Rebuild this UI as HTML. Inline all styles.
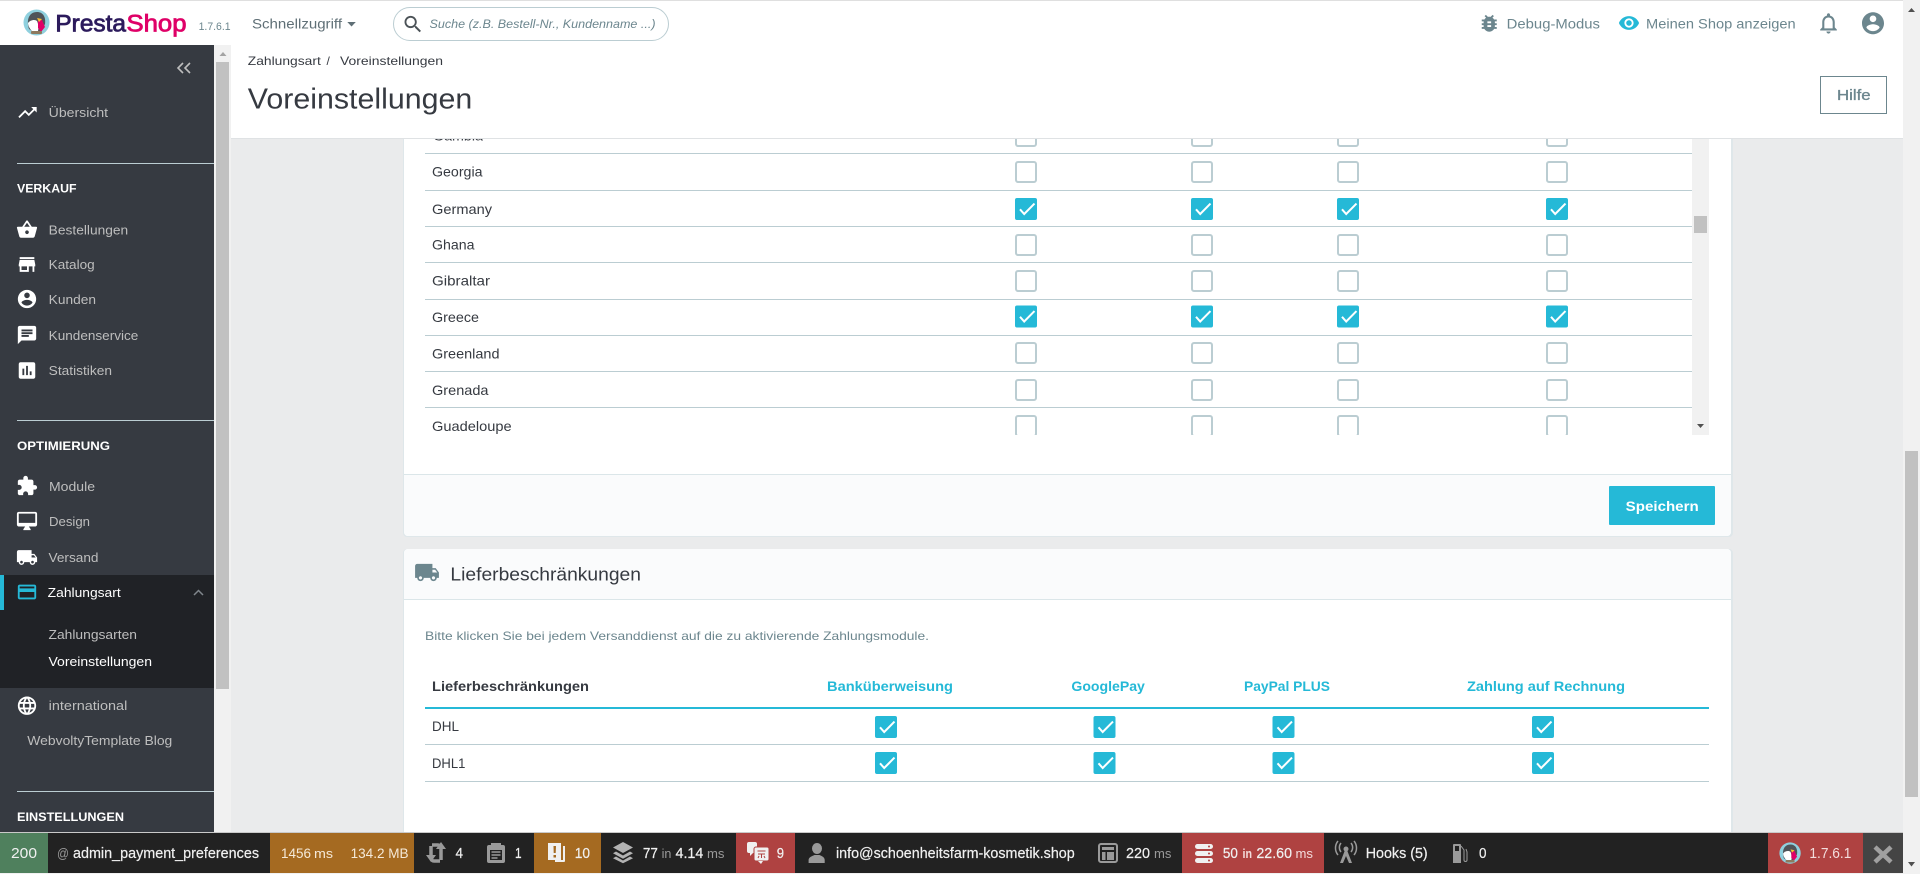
<!DOCTYPE html>
<html lang="de">
<head>
<meta charset="utf-8">
<title>Voreinstellungen - PrestaShop</title>
<style>
html,body{margin:0;padding:0;width:1920px;height:874px;overflow:hidden;background:#eaebec}
svg{display:block;font-family:"Liberation Sans",Arial,sans-serif}
.side{font-size:13px;fill:#bebebe}
.head{font-size:12px;font-weight:700;fill:#fff}
.row{font-size:14px;fill:#363a41}
.gr{font-size:14px;fill:#6c868e}
.th{font-size:14px;font-weight:700;fill:#25b9d7}
.bar{font-size:14.5px;fill:#f0f0f0;stroke:#f0f0f0;stroke-width:.2px}
.b2{font-size:12.5px;fill:#9a9a9a}
.o2{font-size:12.5px;fill:#f5e9d8}
</style>
</head>
<body>
<svg width="1920" height="874" viewBox="0 0 1920 874" xmlns="http://www.w3.org/2000/svg">
<defs>
<g id="u"><rect x="1" y="1" width="20" height="20" rx="2" fill="#fff" stroke="#bbcdd2" stroke-width="2"/></g>
<g id="k"><rect width="22" height="22" rx="2" fill="#25b9d7"/><path d="M5 11.3L9.2 16 19.5 5.6" fill="none" stroke="#fff" stroke-width="2"/></g>
<path id="i-up" d="M16 6l2.29 2.29-4.88 4.88-4-4L2 16.59 3.41 18l6-6 4 4 6.3-6.29L22 12V6z"/>
<path id="i-bask" d="M17.21 9l-4.38-6.56c-.19-.28-.51-.42-.83-.42-.32 0-.64.14-.83.43L6.79 9H2c-.55 0-1 .45-1 1 0 .09.01.18.04.27l2.54 9.27c.23.84 1 1.46 1.92 1.46h13c.92 0 1.69-.62 1.93-1.46l2.54-9.27L23 10c0-.55-.45-1-1-1h-4.79zM9 9l3-4.4L15 9H9zm3 8c-1.1 0-2-.9-2-2s.9-2 2-2 2 .9 2 2-.9 2-2 2z"/>
<path id="i-store" d="M20 4H4v2h16V4zm1 10v-2l-1-5H4l-1 5v2h1v6h10v-6h4v6h2v-6h1zm-9 4H6v-4h6v4z"/>
<path id="i-acc" d="M12 2C6.48 2 2 6.48 2 12s4.48 10 10 10 10-4.48 10-10S17.52 2 12 2zm0 3c1.66 0 3 1.34 3 3s-1.34 3-3 3-3-1.34-3-3 1.34-3 3-3zm0 14.2c-2.5 0-4.71-1.28-6-3.22.03-1.99 4-3.08 6-3.08 1.99 0 5.97 1.09 6 3.08-1.29 1.94-3.5 3.22-6 3.22z"/>
<path id="i-chat" d="M20 2H4c-1.1 0-1.99.9-1.99 2L2 22l4-4h14c1.1 0 2-.9 2-2V4c0-1.1-.9-2-2-2zM6 9h12v2H6V9zm8 5H6v-2h8v2zm4-6H6V6h12v2z"/>
<path id="i-stat" d="M19 3H5c-1.1 0-2 .9-2 2v14c0 1.1.9 2 2 2h14c1.1 0 2-.9 2-2V5c0-1.1-.9-2-2-2zM9 17H7v-7h2v7zm4 0h-2V7h2v10zm4 0h-2v-4h2v4z"/>
<path id="i-ext" d="M20.5 11H19V7c0-1.1-.9-2-2-2h-4V3.5C13 2.12 11.88 1 10.5 1S8 2.12 8 3.5V5H4c-1.1 0-1.99.9-1.99 2v3.8H3.5c1.49 0 2.7 1.21 2.7 2.7s-1.21 2.7-2.7 2.7H2V20c0 1.1.9 2 2 2h3.8v-1.5c0-1.49 1.21-2.7 2.7-2.7 1.49 0 2.7 1.21 2.7 2.7V22H17c1.1 0 2-.9 2-2v-4h1.5c1.38 0 2.5-1.12 2.5-2.5S21.88 11 20.5 11z"/>
<path id="i-desk" d="M21 2H3c-1.1 0-2 .9-2 2v12c0 1.1.9 2 2 2h7l-2 3v1h8v-1l-2-3h7c1.1 0 2-.9 2-2V4c0-1.1-.9-2-2-2zm0 12H3V4h18v10z"/>
<path id="i-truck" d="M20 8h-3V4H3c-1.1 0-2 .9-2 2v11h2c0 1.66 1.34 3 3 3s3-1.34 3-3h6c0 1.66 1.34 3 3 3s3-1.34 3-3h2v-5l-3-4zM6 18.5c-.83 0-1.5-.67-1.5-1.5s.67-1.5 1.5-1.5 1.5.67 1.5 1.5-.67 1.5-1.5 1.5zm13.5-9l1.96 2.5H17V9.5h2.5zm-1.5 9c-.83 0-1.5-.67-1.5-1.5s.67-1.5 1.5-1.5 1.5.67 1.5 1.5-.67 1.5-1.5 1.5z"/>
<path id="i-card" d="M20 4H4c-1.11 0-1.99.89-1.99 2L2 18c0 1.11.89 2 2 2h16c1.11 0 2-.89 2-2V6c0-1.11-.89-2-2-2zm0 14H4v-6h16v6zm0-10H4V6h16v2z"/>
<path id="i-lang" d="M11.99 2C6.47 2 2 6.48 2 12s4.47 10 9.99 10C17.52 22 22 17.52 22 12S17.52 2 11.99 2zm6.93 6h-2.95c-.32-1.25-.78-2.45-1.38-3.56 1.84.63 3.37 1.91 4.33 3.56zM12 4.04c.83 1.2 1.48 2.53 1.91 3.96h-3.82c.43-1.43 1.08-2.76 1.91-3.96zM4.26 14C4.1 13.36 4 12.69 4 12s.1-1.36.26-2h3.38c-.08.66-.14 1.32-.14 2 0 .68.06 1.34.14 2H4.26zm.82 2h2.95c.32 1.25.78 2.45 1.38 3.56-1.84-.63-3.37-1.9-4.33-3.56zm2.95-8H5.08c.96-1.66 2.49-2.93 4.33-3.56C8.81 5.55 8.35 6.75 8.03 8zM12 19.96c-.83-1.2-1.48-2.53-1.91-3.96h3.82c-.43 1.43-1.08 2.76-1.91 3.96zM14.34 14H9.66c-.09-.66-.16-1.32-.16-2 0-.68.07-1.35.16-2h4.68c.09.65.16 1.32.16 2 0 .68-.07 1.34-.16 2zm.25 5.56c.6-1.11 1.06-2.31 1.38-3.56h2.95c-.96 1.65-2.49 2.93-4.33 3.56zM16.36 14c.08-.66.14-1.32.14-2 0-.68-.06-1.34-.14-2h3.38c.16.64.26 1.31.26 2s-.1 1.36-.26 2h-3.38z"/>
<path id="i-bug" d="M20 8h-2.81c-.45-.78-1.07-1.45-1.82-1.96L17 4.41 15.59 3l-2.17 2.17C12.96 5.06 12.49 5 12 5c-.49 0-.96.06-1.41.17L8.41 3 7 4.41l1.62 1.63C7.88 6.55 7.26 7.22 6.81 8H4v2h2.09c-.05.33-.09.66-.09 1v1H4v2h2v1c0 .34.04.67.09 1H4v2h2.81c1.04 1.79 2.97 3 5.19 3s4.15-1.21 5.19-3H20v-2h-2.09c.05-.33.09-.66.09-1v-1h2v-2h-2v-1c0-.34-.04-.67-.09-1H20V8zm-6 8h-4v-2h4v2zm0-4h-4v-2h4v2z"/>
<path id="i-eye" d="M12 4.5C7 4.5 2.73 7.61 1 12c1.73 4.39 6 7.5 11 7.5s9.27-3.11 11-7.5c-1.73-4.39-6-7.5-11-7.5zM12 17c-2.76 0-5-2.24-5-5s2.24-5 5-5 5 2.24 5 5-2.24 5-5 5zm0-8c-1.66 0-3 1.34-3 3s1.34 3 3 3 3-1.34 3-3-1.34-3-3-3z"/>
<path id="i-bell" d="M12 22c1.1 0 2-.9 2-2h-4c0 1.1.9 2 2 2zm6-6v-5c0-3.07-1.63-5.64-4.5-6.32V4c0-.83-.67-1.5-1.5-1.5s-1.5.67-1.5 1.5v.68C7.64 5.36 6 7.92 6 11v5l-2 2v1h16v-1l-2-2zm-2 1H8v-6c0-2.48 1.51-4.5 4-4.5s4 2.02 4 4.5v6z"/>
<path id="i-search" d="M15.5 14h-.79l-.28-.27C15.41 12.59 16 11.11 16 9.5 16 5.91 13.09 3 9.5 3S3 5.91 3 9.5 5.91 16 9.5 16c1.61 0 3.09-.59 4.23-1.57l.27.28v.79l5 4.99L20.49 19l-4.99-5zm-6 0C7.01 14 5 11.99 5 9.5S7.01 5 9.5 5 14 7.01 14 9.5 11.99 14 9.5 14z"/>
<g id="puffin">
<circle cx="13.5" cy="13.5" r="13" fill="#8fd0de"/>
<path d="M6 20C3 11 6 3 14 3c6 0 9 5 8 12l-4 7H9z" fill="#4f5459"/>
<path d="M5 14c2-3 7-4 9-2 1 2 2 6 1 10H9c-2-2-4-5-4-8z" fill="#fff"/>
<path d="M15 9l4 2 3 7-4 5-3-4z" fill="#df0067"/>
<path d="M14 9l5 1-3 3z" fill="#f4c233"/>
<rect x="8" y="22" width="11" height="3" rx="1" fill="#8d7a5f"/>
</g>
</defs>

<!-- page background -->
<rect width="1920" height="874" fill="#eaebec"/>

<!-- Card 1: country restrictions -->
<rect x="403" y="130" width="1330" height="407" rx="4" fill="#dfe7ea"/>
<rect x="404" y="130" width="1327" height="406" rx="4" fill="#fff"/>

<g class="row">
<text class="row" x="433" y="140.5" textLength="50" lengthAdjust="spacingAndGlyphs">Gambia</text>
<text class="row" x="432" y="176.5" textLength="50.5" lengthAdjust="spacingAndGlyphs">Georgia</text>
<text class="row" x="432" y="214" textLength="60" lengthAdjust="spacingAndGlyphs">Germany</text>
<text class="row" x="432" y="249.5" textLength="42.5" lengthAdjust="spacingAndGlyphs">Ghana</text>
<text class="row" x="432" y="285.5" textLength="58" lengthAdjust="spacingAndGlyphs">Gibraltar</text>
<text class="row" x="432" y="322" textLength="47" lengthAdjust="spacingAndGlyphs">Greece</text>
<text class="row" x="432" y="358.5" textLength="67.5" lengthAdjust="spacingAndGlyphs">Greenland</text>
<text class="row" x="432" y="395" textLength="56.5" lengthAdjust="spacingAndGlyphs">Grenada</text>
<text class="row" x="432" y="431" textLength="79.6" lengthAdjust="spacingAndGlyphs">Guadeloupe</text>
</g>
<g fill="#bbcdd2">
<rect x="425" y="153" width="1267" height="1"/>
<rect x="425" y="190" width="1267" height="1"/>
<rect x="425" y="226" width="1267" height="1"/>
<rect x="425" y="262" width="1267" height="1"/>
<rect x="425" y="299" width="1267" height="1"/>
<rect x="425" y="335" width="1267" height="1"/>
<rect x="425" y="371" width="1267" height="1"/>
<rect x="425" y="407" width="1267" height="1"/>
</g>
<!-- checkbox columns -->
<use href="#u" x="1015" y="125"/><use href="#u" x="1191" y="125"/><use href="#u" x="1337" y="125"/><use href="#u" x="1546" y="125"/>
<use href="#u" x="1015" y="161"/><use href="#u" x="1191" y="161"/><use href="#u" x="1337" y="161"/><use href="#u" x="1546" y="161"/>
<use href="#k" x="1015" y="198"/><use href="#k" x="1191" y="198"/><use href="#k" x="1337" y="198"/><use href="#k" x="1546" y="198"/>
<use href="#u" x="1015" y="234"/><use href="#u" x="1191" y="234"/><use href="#u" x="1337" y="234"/><use href="#u" x="1546" y="234"/>
<use href="#u" x="1015" y="270"/><use href="#u" x="1191" y="270"/><use href="#u" x="1337" y="270"/><use href="#u" x="1546" y="270"/>
<use href="#k" x="1015" y="305.500"/><use href="#k" x="1191" y="305.500"/><use href="#k" x="1337" y="305.500"/><use href="#k" x="1546" y="305.500"/>
<use href="#u" x="1015" y="342"/><use href="#u" x="1191" y="342"/><use href="#u" x="1337" y="342"/><use href="#u" x="1546" y="342"/>
<use href="#u" x="1015" y="379"/><use href="#u" x="1191" y="379"/><use href="#u" x="1337" y="379"/><use href="#u" x="1546" y="379"/>
<use href="#u" x="1015" y="415"/><use href="#u" x="1191" y="415"/><use href="#u" x="1337" y="415"/><use href="#u" x="1546" y="415"/>
<!-- clip below list -->
<rect x="425" y="435" width="1306" height="39" fill="#fff"/>
<!-- inner scrollbar -->
<rect x="1692" y="130" width="17" height="305" fill="#f1f1f1"/>
<rect x="1694" y="216" width="13" height="17" fill="#c1c1c1"/>
<path d="M1697 424h7l-3.5 4z" fill="#505050"/>
<!-- card footer -->
<path d="M404 474H1731V532a4 4 0 0 1-4 4H408a4 4 0 0 1-4-4z" fill="#fafbfc"/>
<rect x="404" y="474" width="1327" height="1" fill="#dbe6e9"/>
<rect x="1609" y="486" width="106" height="39" rx="1" fill="#25b9d7"/>
<text x="1625.7" y="511" font-size="14" font-weight="700" fill="#fff" textLength="73" lengthAdjust="spacingAndGlyphs">Speichern</text>

<!-- Card 2: carrier restrictions -->
<path d="M403 553a4 4 0 0 1 4-4H1729a4 4 0 0 1 4 4V840H403z" fill="#dfe7ea"/>
<path d="M404 553a4 4 0 0 1 4-4H1727a4 4 0 0 1 4 4V840H404z" fill="#fff"/>
<path d="M404 553a4 4 0 0 1 4-4H1727a4 4 0 0 1 4 4V599H404z" fill="#fafbfc"/>
<rect x="404" y="599" width="1327" height="1" fill="#dbe6e9"/>
<svg x="414" y="559.5" width="26" height="26" viewBox="0 0 24 24" fill="#6c868e"><use href="#i-truck"/></svg>
<text x="450.4" y="580.3" font-size="18" fill="#363a41" textLength="190.6" lengthAdjust="spacingAndGlyphs">Lieferbeschränkungen</text>
<text x="425" y="640" font-size="12" fill="#6c868e" textLength="504" lengthAdjust="spacingAndGlyphs">Bitte klicken Sie bei jedem Versanddienst auf die zu aktivierende Zahlungsmodule.</text>
<text x="432" y="691" font-size="14" font-weight="700" fill="#363a41" textLength="157" lengthAdjust="spacingAndGlyphs">Lieferbeschränkungen</text>
<text class="th" x="827" y="691" textLength="126" lengthAdjust="spacingAndGlyphs">Banküberweisung</text>
<text class="th" x="1071.4" y="691" textLength="73.5" lengthAdjust="spacingAndGlyphs">GooglePay</text>
<text class="th" x="1244" y="691" textLength="86" lengthAdjust="spacingAndGlyphs">PayPal PLUS</text>
<text class="th" x="1467" y="691" textLength="158" lengthAdjust="spacingAndGlyphs">Zahlung auf Rechnung</text>
<rect x="425" y="707" width="1284" height="2" fill="#25b9d7"/>
<text class="row" x="432" y="731" textLength="27" lengthAdjust="spacingAndGlyphs">DHL</text>
<text class="row" x="432" y="768" textLength="33.4" lengthAdjust="spacingAndGlyphs">DHL1</text>
<rect x="425" y="744" width="1284" height="1" fill="#bbcdd2"/>
<rect x="425" y="781" width="1284" height="1" fill="#bbcdd2"/>
<use href="#k" x="875" y="716"/><use href="#k" x="1093.500" y="716"/><use href="#k" x="1272.500" y="716"/><use href="#k" x="1532" y="716"/>
<use href="#k" x="875" y="752"/><use href="#k" x="1093.500" y="752"/><use href="#k" x="1272.500" y="752"/><use href="#k" x="1532" y="752"/>

<!-- Header bar -->
<rect x="231" y="45" width="1672" height="93" fill="#fff"/>
<rect x="231" y="138" width="1672" height="1" fill="#dfe2e4"/>
<text x="247.8" y="65" font-size="12" fill="#363a41" textLength="73" lengthAdjust="spacingAndGlyphs">Zahlungsart</text>
<text x="326.5" y="65" font-size="12" fill="#363a41">/</text>
<text x="340" y="65" font-size="12" fill="#363a41" textLength="103" lengthAdjust="spacingAndGlyphs">Voreinstellungen</text>
<text x="247.8" y="108.7" font-size="29" fill="#363a41" textLength="224.5" lengthAdjust="spacingAndGlyphs">Voreinstellungen</text>
<rect x="1820.5" y="76.5" width="66" height="37" fill="#fff" stroke="#6c868e"/>
<text x="1837" y="100" font-size="15" fill="#6c868e" stroke="#6c868e" stroke-width=".35" textLength="33.6" lengthAdjust="spacingAndGlyphs">Hilfe</text>

<!-- Top bar -->
<rect width="1903" height="45" fill="#fff"/>
<rect width="1903" height="1" fill="#dfdfdf"/>
<use href="#puffin" x="23" y="9"/>
<text x="55.4" y="31.3" font-size="24" fill="#2c1b5c" stroke="#2c1b5c" stroke-width=".8" textLength="70.6" lengthAdjust="spacingAndGlyphs">Presta</text>
<text x="126.5" y="31.3" font-size="24" fill="#df0067" stroke="#df0067" stroke-width=".8" textLength="60" lengthAdjust="spacingAndGlyphs">Shop</text>
<text x="198.6" y="30" font-size="11" fill="#6c868e" textLength="32" lengthAdjust="spacingAndGlyphs">1.7.6.1</text>
<text x="252" y="28.3" font-size="14" fill="#5f6f76" textLength="90" lengthAdjust="spacingAndGlyphs">Schnellzugriff</text>
<path d="M347.3 22h8.5l-4.25 4.5z" fill="#5f6f76"/>
<rect x="393.5" y="7.5" width="275" height="33" rx="16.5" fill="#fff" stroke="#bbcdd2"/>
<svg x="401.7" y="13" width="22.6" height="22.6" viewBox="0 0 24 24" fill="#4b5257"><use href="#i-search"/></svg>
<text x="429.5" y="28" font-size="12" font-style="italic" fill="#6c868e" textLength="226" lengthAdjust="spacingAndGlyphs">Suche (z.B. Bestell-Nr., Kundenname ...)</text>
<svg x="1478" y="12" width="22.5" height="22.5" viewBox="0 0 24 24" fill="#6c868e"><use href="#i-bug"/></svg>
<text class="gr" x="1506.7" y="28.3" textLength="93.3" lengthAdjust="spacingAndGlyphs">Debug-Modus</text>
<svg x="1618" y="12" width="22" height="22" viewBox="0 0 24 24" fill="#25b9d7"><use href="#i-eye"/></svg>
<text class="gr" x="1646" y="28.3" textLength="149.7" lengthAdjust="spacingAndGlyphs">Meinen Shop anzeigen</text>
<svg x="1816" y="10.7" width="25" height="25" viewBox="0 0 24 24" fill="#6c868e"><use href="#i-bell"/></svg>
<svg x="1859.8" y="10" width="26.4" height="26.4" viewBox="0 0 24 24" fill="#6c868e"><use href="#i-acc"/></svg>

<!-- Sidebar -->
<rect x="0" y="45" width="214" height="788" fill="#363a41"/>
<rect x="214" y="45" width="17" height="788" fill="#f1f1f1"/>
<rect x="216" y="62" width="13" height="627" fill="#c1c1c1"/>
<path d="M219.5 56h7l-3.5-4z" fill="#a3a3a3"/>
<path d="M183 63l-5 5 5 5M190 63l-5 5 5 5" fill="none" stroke="#bebebe" stroke-width="1.6"/>

<svg x="16.5" y="101.5" width="22" height="22" viewBox="0 0 24 24" fill="#fff"><use href="#i-up"/></svg>
<text class="side" x="48.7" y="117" textLength="59.4" lengthAdjust="spacingAndGlyphs">Übersicht</text>
<rect x="17" y="163" width="197" height="1" fill="#bbcdd2"/>
<text class="head" x="17" y="192.500" textLength="59.5" lengthAdjust="spacingAndGlyphs">VERKAUF</text>

<svg x="16" y="218.5" width="22" height="22" viewBox="0 0 24 24" fill="#fff"><use href="#i-bask"/></svg>
<text class="side" x="48.7" y="234.3" textLength="79.5" lengthAdjust="spacingAndGlyphs">Bestellungen</text>
<svg x="16" y="253.5" width="22" height="22" viewBox="0 0 24 24" fill="#fff"><use href="#i-store"/></svg>
<text class="side" x="48.7" y="269" textLength="46" lengthAdjust="spacingAndGlyphs">Katalog</text>
<svg x="16" y="288" width="22" height="22" viewBox="0 0 24 24" fill="#fff"><use href="#i-acc"/></svg>
<text class="side" x="48.7" y="304" textLength="47.3" lengthAdjust="spacingAndGlyphs">Kunden</text>
<svg x="16" y="324" width="22" height="22" viewBox="0 0 24 24" fill="#fff"><use href="#i-chat"/></svg>
<text class="side" x="48.7" y="340" textLength="89.6" lengthAdjust="spacingAndGlyphs">Kundenservice</text>
<svg x="16" y="359.5" width="22" height="22" viewBox="0 0 24 24" fill="#fff"><use href="#i-stat"/></svg>
<text class="side" x="48.7" y="375" textLength="63.3" lengthAdjust="spacingAndGlyphs">Statistiken</text>

<rect x="17" y="420" width="197" height="1" fill="#bbcdd2"/>
<text class="head" x="17" y="450" textLength="93" lengthAdjust="spacingAndGlyphs">OPTIMIERUNG</text>

<svg x="16" y="475" width="22" height="22" viewBox="0 0 24 24" fill="#fff"><use href="#i-ext"/></svg>
<text class="side" x="49" y="491" textLength="46" lengthAdjust="spacingAndGlyphs">Module</text>
<svg x="16" y="510" width="22" height="22" viewBox="0 0 24 24" fill="#fff"><use href="#i-desk"/></svg>
<text class="side" x="49" y="526" textLength="41" lengthAdjust="spacingAndGlyphs">Design</text>
<svg x="16" y="546.5" width="22" height="22" viewBox="0 0 24 24" fill="#fff"><use href="#i-truck"/></svg>
<text class="side" x="48.5" y="562" textLength="50" lengthAdjust="spacingAndGlyphs">Versand</text>

<rect x="0" y="575" width="214" height="113" fill="#202226"/>
<rect x="0" y="575" width="4" height="35" fill="#25b9d7"/>
<svg x="16" y="581" width="22" height="22" viewBox="0 0 24 24" fill="#25b9d7"><use href="#i-card"/></svg>
<text x="47.7" y="597" font-size="13" fill="#fff" textLength="73" lengthAdjust="spacingAndGlyphs">Zahlungsart</text>
<path d="M194 595l4.500-4.500 4.500 4.500" fill="none" stroke="#80868c" stroke-width="1.500"/>
<text class="side" x="48.5" y="639" textLength="88.5" lengthAdjust="spacingAndGlyphs">Zahlungsarten</text>
<text x="48.5" y="666" font-size="13" fill="#fff" textLength="103.5" lengthAdjust="spacingAndGlyphs">Voreinstellungen</text>

<svg x="16" y="694.7" width="22" height="22" viewBox="0 0 24 24" fill="#fff"><use href="#i-lang"/></svg>
<text class="side" x="48.7" y="710" textLength="78.6" lengthAdjust="spacingAndGlyphs">international</text>
<text class="side" x="27.3" y="745" textLength="145" lengthAdjust="spacingAndGlyphs">WebvoltyTemplate Blog</text>
<rect x="17" y="791" width="197" height="1" fill="#bbcdd2"/>
<text class="head" x="17" y="821" textLength="107" lengthAdjust="spacingAndGlyphs">EINSTELLUNGEN</text>

<!-- Page scrollbar -->
<rect x="1903" y="0" width="17" height="874" fill="#f1f1f1"/>
<rect x="1905" y="451" width="13" height="346" fill="#c1c1c1"/>
<path d="M1908 12h7l-3.500-4z" fill="#505050"/>
<path d="M1908 862h7l-3.500 4.500z" fill="#505050"/>

<!-- Debug bar -->
<rect x="0" y="832" width="1903" height="1" fill="#c9c9c9"/>
<rect x="0" y="833" width="1903" height="40" fill="#222"/>
<rect x="0" y="873" width="1903" height="1" fill="#f1f1f1"/>
<rect x="0" y="833" width="48" height="40" fill="#4f805d"/>
<rect x="270" y="833" width="144" height="40" fill="#a56a21"/>
<rect x="534" y="833" width="67" height="40" fill="#a56a21"/>
<rect x="736" y="833" width="59" height="40" fill="#af4241"/>
<rect x="1182" y="833" width="142" height="40" fill="#af4241"/>
<rect x="1768" y="833" width="95" height="40" fill="#af4241"/>
<rect x="1863" y="833" width="40" height="40" fill="#444"/>

<text x="11" y="858" font-size="15" fill="#f0f0f0" textLength="26" lengthAdjust="spacingAndGlyphs">200</text>
<text x="57" y="858" font-size="14" fill="#9a9a9a" textLength="12" lengthAdjust="spacingAndGlyphs">@</text>
<text class="bar" x="73" y="858" textLength="186" lengthAdjust="spacingAndGlyphs">admin_payment_preferences</text>
<text x="281" y="858" font-size="14" fill="#f5e9d8" textLength="30" lengthAdjust="spacingAndGlyphs">1456</text>
<text class="o2" x="314" y="858" textLength="19" lengthAdjust="spacingAndGlyphs">ms</text>
<text x="350.6" y="858" font-size="14" fill="#f5e9d8" textLength="58" lengthAdjust="spacingAndGlyphs">134.2 MB</text>

<!-- routing icon -->
<path d="M431 846v12a3 3 0 0 0 3 3h6M441 860v-12a3 3 0 0 0-3-3h-6" fill="none" stroke="#9a9a9a" stroke-width="3.500"/>
<path d="M426 855h10l-5 7zM436 849h10l-5-7z" fill="#9a9a9a"/>
<text class="bar" x="455.5" y="858" textLength="7.500" lengthAdjust="spacingAndGlyphs">4</text>
<!-- clipboard icon -->
<rect x="487" y="845" width="18" height="18" rx="2" fill="#9a9a9a"/>
<rect x="491" y="843" width="10" height="4" fill="#9a9a9a"/>
<path d="M490 850h12v10h-12z" fill="#222"/>
<path d="M491.500 852h9M491.500 855h9M491.500 858h6" stroke="#9a9a9a" stroke-width="1.500"/>
<text class="bar" x="515" y="858" textLength="6.600" lengthAdjust="spacingAndGlyphs">1</text>
<!-- log icon -->
<path d="M563 846h2v15a1 1 0 0 1-1 1h-9v-2h8z" fill="#f0f0f0"/>
<rect x="548" y="843" width="13" height="17" fill="#f0f0f0"/>
<path d="M553.500 846h2.500l-.3 7h-2z" fill="#a56a21"/><rect x="553.500" y="855" width="2.500" height="2.500" fill="#a56a21"/>
<text class="bar" x="574.700" y="858" textLength="15.300" lengthAdjust="spacingAndGlyphs">10</text>
<!-- layers icon -->
<path d="M623 842l10 5.500-10 5.500-10-5.500z" fill="#b3b3b3"/>
<path d="M616 851.500l7 4 7-4 3 1.700-10 5.500-10-5.500z" fill="#b3b3b3"/>
<path d="M616 856.500l7 4 7-4 3 1.700-10 5-10-5z" fill="#b3b3b3"/>
<text class="bar" x="642.900" y="858" textLength="15" lengthAdjust="spacingAndGlyphs">77</text>
<text class="b2" x="661.600" y="858" textLength="9.800" lengthAdjust="spacingAndGlyphs">in</text>
<text class="bar" x="675.500" y="858" textLength="27.800" lengthAdjust="spacingAndGlyphs">4.14</text>
<text class="b2" x="707" y="858" textLength="17.500" lengthAdjust="spacingAndGlyphs">ms</text>
<!-- translation icon -->
<rect x="747" y="842" width="10" height="11" rx="2" fill="#f0f0f0"/><path d="M750 853v3l3-3z" fill="#f0f0f0"/>
<rect x="754" y="847" width="15" height="14" rx="2" fill="#f0f0f0" stroke="#af4241"/>
<path d="M758 861h5l-2 3z" fill="#f0f0f0"/>
<path d="M757.500 851h8M758 854h7M761.500 854v4M758 858l1-2M765 858l-1-2" stroke="#af4241" stroke-width="1" fill="none"/>
<text class="bar" x="776.700" y="858" textLength="7.300" lengthAdjust="spacingAndGlyphs">9</text>
<!-- user icon -->
<ellipse cx="817" cy="848.500" rx="5" ry="5.500" fill="#9a9a9a"/>
<path d="M808.600 863v-3c0-3 4-4 5.900-5h5c2 1 5.200 2 5.200 5v3z" fill="#9a9a9a"/>
<text class="bar" x="836" y="858" textLength="238.700" lengthAdjust="spacingAndGlyphs">info@schoenheitsfarm-kosmetik.shop</text>
<!-- template icon -->
<rect x="1099" y="844" width="18" height="18" rx="2" fill="none" stroke="#9a9a9a" stroke-width="2"/>
<rect x="1102" y="847" width="12" height="3" fill="#9a9a9a"/>
<rect x="1102" y="852" width="3.500" height="8" fill="#9a9a9a"/>
<rect x="1107" y="852" width="7" height="8" fill="#9a9a9a"/>
<text class="bar" x="1126" y="858" textLength="24" lengthAdjust="spacingAndGlyphs">220</text>
<text class="b2" x="1154" y="858" textLength="17.400" lengthAdjust="spacingAndGlyphs">ms</text>
<!-- database icon -->
<rect x="1195" y="844" width="18" height="5" rx="2.500" fill="#f0f0f0"/>
<rect x="1195" y="851" width="18" height="5" rx="2.500" fill="#f0f0f0"/>
<rect x="1195" y="858" width="18" height="5" rx="2.500" fill="#f0f0f0"/>
<circle cx="1209" cy="846.500" r="1" fill="#af4241"/><circle cx="1209" cy="853.500" r="1" fill="#af4241"/><circle cx="1209" cy="860.500" r="1" fill="#af4241"/>
<text class="bar" x="1222.900" y="858" textLength="15" lengthAdjust="spacingAndGlyphs">50</text>
<text x="1242.500" y="858" font-size="13" font-weight="700" fill="#f3dcdc" textLength="9.500" lengthAdjust="spacingAndGlyphs">in</text>
<text class="bar" x="1256.400" y="858" textLength="35.600" lengthAdjust="spacingAndGlyphs">22.60</text>
<text x="1295.500" y="858" font-size="13" fill="#f3dcdc" textLength="17.500" lengthAdjust="spacingAndGlyphs">ms</text>
<!-- hooks icon -->
<circle cx="1346" cy="849" r="2.500" fill="#9a9a9a"/>
<path d="M1345 850l-5 13h3l3-7 3 7h3l-5-13z" fill="#9a9a9a"/>
<path d="M1341 852a7 7 0 0 1 0-9M1351 852a7 7 0 0 0 0-9M1338 855a11 11 0 0 1 0-14M1354 855a11 11 0 0 0 0-14" fill="none" stroke="#9a9a9a" stroke-width="1.500"/>
<text class="bar" x="1365.700" y="858" textLength="62" lengthAdjust="spacingAndGlyphs">Hooks (5)</text>
<!-- fuel icon -->
<path d="M1453 845a1 1 0 0 1 1-1h6a1 1 0 0 1 1 1v18h-8z" fill="#9a9a9a"/>
<rect x="1455" y="846" width="4" height="5" fill="#222"/>
<path d="M1461 846l3 4v10a1.500 1.500 0 0 0 3 0v-8l-1-3" fill="none" stroke="#9a9a9a"/>
<text class="bar" x="1479" y="858" textLength="7.500" lengthAdjust="spacingAndGlyphs">0</text>
<!-- version -->
<use href="#puffin" transform="translate(1779 842) scale(.82)"/>
<text x="1809.400" y="858" font-size="14.500" fill="#f3dcdc" textLength="42" lengthAdjust="spacingAndGlyphs">1.7.6.1</text>
<path d="M1875 847l16 15M1891 847l-16 15" stroke="#a0a0a0" stroke-width="4.500"/>
</svg>
</body>
</html>
